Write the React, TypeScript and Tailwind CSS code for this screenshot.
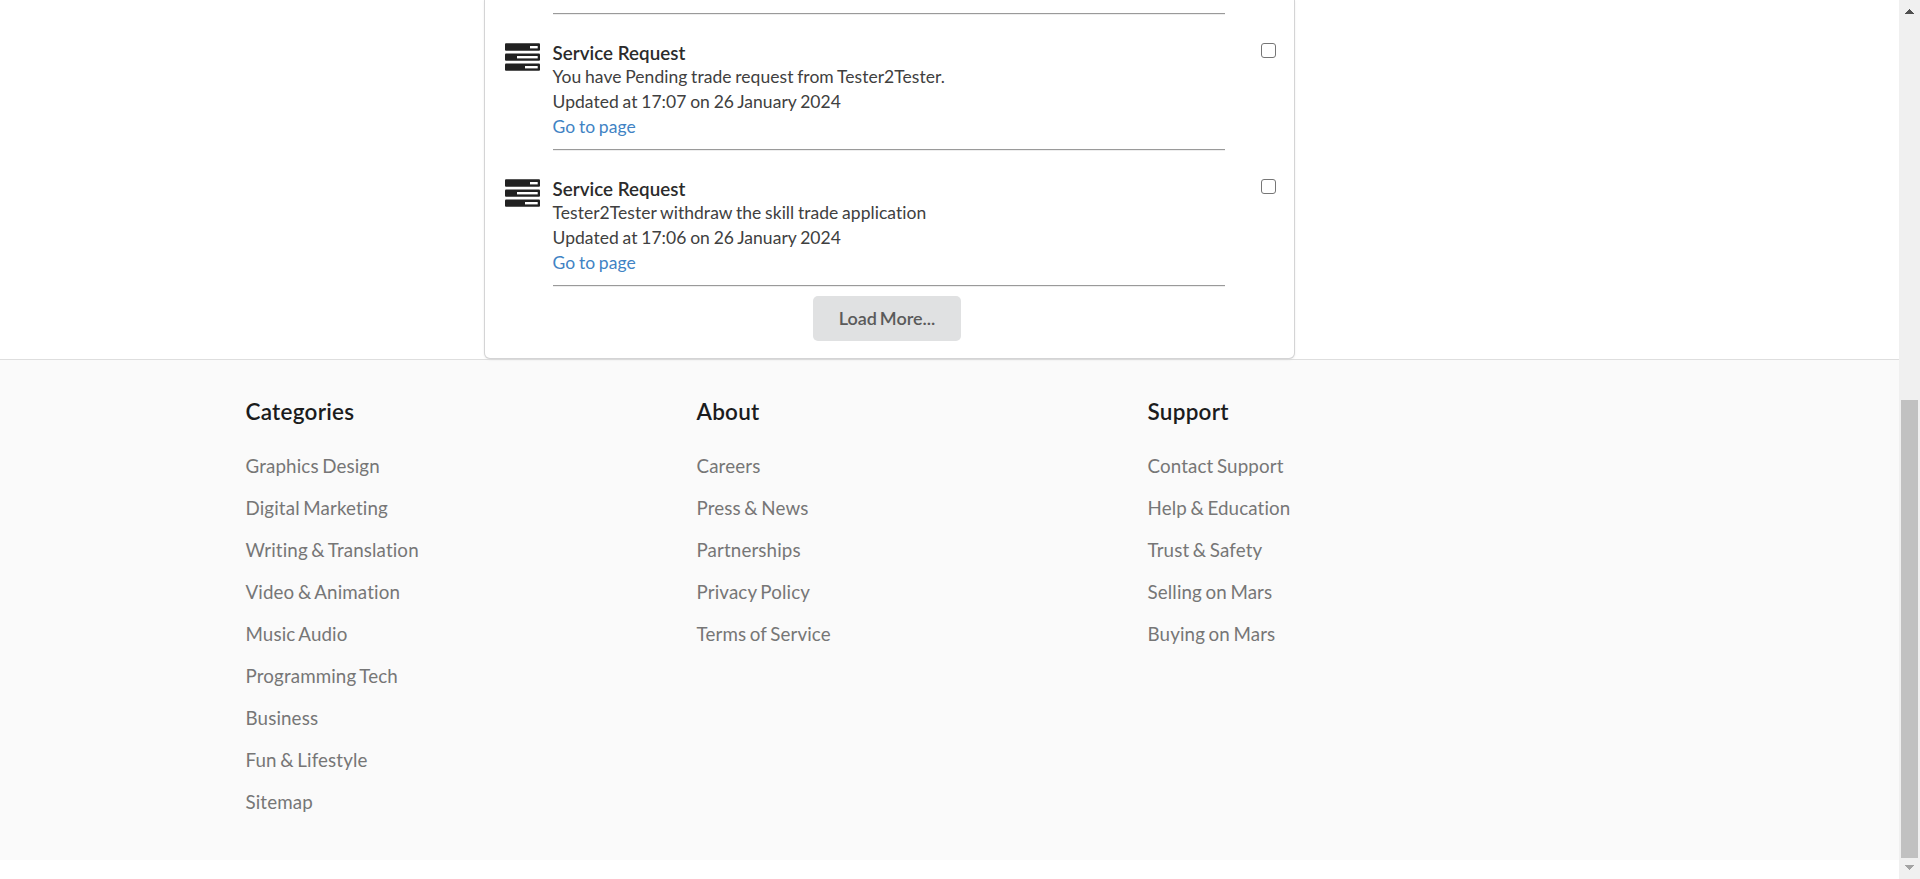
const requests = [
  { message: "You have Pending trade request from Tester2Tester.", time: "17:07" },
  { message: "Tester2Tester withdraw the skill trade application", time: "17:06" },
];

const columns = [
  {
    title: "Categories",
    links: [
      "Graphics Design",
      "Digital Marketing",
      "Writing & Translation",
      "Video & Animation",
      "Music Audio",
      "Programming Tech",
      "Business",
      "Fun & Lifestyle",
      "Sitemap",
    ],
  },
  {
    title: "About",
    links: ["Careers", "Press & News", "Partnerships", "Privacy Policy", "Terms of Service"],
  },
  {
    title: "Support",
    links: ["Contact Support", "Help & Education", "Trust & Safety", "Selling on Mars", "Buying on Mars"],
  },
];

function TasksIcon() {
  return (
    <svg className="mt-7 h-7 w-[35px] shrink-0" viewBox="0 0 35 28" fill="#212121">
      <rect x="0" y="0.3" width="35" height="7.5" rx="1" />
      <rect x="0" y="10.5" width="35" height="7.3" rx="1" />
      <rect x="0" y="20.4" width="35" height="7.4" rx="1" />
      <g fill="#fff">
        <rect x="25" y="3" width="7.7" height="2.4" />
        <rect x="12" y="13" width="20.7" height="2.4" />
        <rect x="20" y="23" width="12.7" height="2.4" />
      </g>
    </svg>
  );
}

function Divider() {
  return <div className="h-0.5 w-[672px] border-t border-b border-t-[#9a9a9a] border-b-[#eeeeee]" />;
}

function Request({ message, time }: { message: string; time: string }) {
  return (
    <div className="flex h-[136px] pl-5">
      <TasksIcon />
      <div className="ml-[12.5px] w-[672.5px] pt-[27px] text-[17.5px] leading-[25px] tracking-[0.04px] text-[#404040] [word-spacing:-0.8px]">
        <div className="h-[22px] text-[18.75px] leading-[22px] font-semibold text-[#2b2b2b] [word-spacing:0]">
          Service Request
        </div>
        <div>{message}</div>
        <div>Updated at {time} on 26 January 2024</div>
        <a className="block text-[#4183c4]">Go to page</a>
        <div className="mt-2.5">
          <Divider />
        </div>
      </div>
      <input
        type="checkbox"
        className="mt-7 ml-9 h-[15px] w-[15px] appearance-none rounded-[3px] border border-[#767676] bg-white"
      />
    </div>
  );
}

function Scrollbar() {
  return (
    <div className="flex h-full w-[21px] shrink-0 flex-col items-center bg-[#f0f0f0]">
      <svg className="mt-[9px] h-[5px] w-[9px] shrink-0" viewBox="0 0 9 5" fill="#505050" shapeRendering="crispEdges">
        <path d="M4 0h1v1h1v1h1v1h1v1h1v1H0V4h1V3h1V2h1V1h1z" />
      </svg>
      <div className="mt-[386px] h-[458px] w-[17px] bg-[#c1c1c1]" />
      <svg className="mt-[7px] h-[5px] w-[9px] shrink-0" viewBox="0 0 9 5" fill="#a3a3a3" shapeRendering="crispEdges">
        <path d="M0 0h9v1H8v1H7v1H6v1H5v1H4V4H3V3H2V2H1V1H0z" />
      </svg>
    </div>
  );
}

export default function App() {
  return (
    <div className="flex h-[879px] w-[1920px] overflow-hidden bg-white font-['Lato',sans-serif]">
      <div className="flex w-[1899px] flex-col">
        <main className="z-10 h-[359px] pl-[485px]">
          <div className="flex h-[358px] w-[809px] flex-col rounded-b-[5px] bg-white pt-[13px] shadow-[0_1px_3px_0_#d4d4d5,0_0_0_1px_#d4d4d5]">
            <div className="pl-[68px]">
              <Divider />
            </div>
            {requests.map((r) => (
              <Request key={r.time} {...r} />
            ))}
            <button className="mt-[9px] ml-[328px] h-[45px] w-[148px] rounded-[5px] bg-[#e0e1e2] text-[18px] font-semibold text-[#5a5a5a] [word-spacing:-1.5px]">
              Load More...
            </button>
          </div>
        </main>
        <footer className="flex h-[501px] border-t border-[#dedede] bg-[#fafafa] pl-[245.5px]">
          {columns.map((c) => (
            <section key={c.title} className="w-[451px] shrink-0 pt-[34px]">
              <h4 className="h-[51px] text-[22.5px] leading-[36px] font-semibold tracking-[0.25px] text-[#1b1c1d]">
                {c.title}
              </h4>
              <ul className="text-[18.75px] leading-[42px] tracking-[0.13px] text-[#767676] [word-spacing:-1.4px]">
                {c.links.map((l) => (
                  <li key={l}>
                    <a>{l}</a>
                  </li>
                ))}
              </ul>
            </section>
          ))}
        </footer>
      </div>
      <Scrollbar />
    </div>
  );
}
